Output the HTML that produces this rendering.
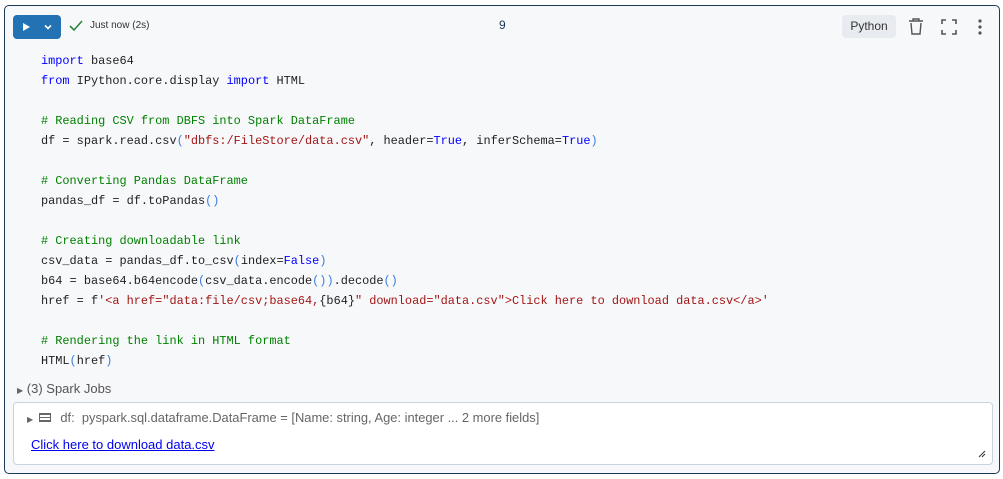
<!DOCTYPE html>
<html><head><style>
*{margin:0;padding:0;box-sizing:border-box}
body{width:1003px;height:479px;background:#fff;font-family:"Liberation Sans",sans-serif;position:relative;overflow:hidden}
.cell{position:absolute;left:4px;top:5px;width:996px;height:469px;border:1px solid #1b3a57;border-radius:5px;background:#f7f8fa}
.run{position:absolute;left:8px;top:9px;width:48px;height:24px;background:#2272b4;border-radius:4px}
.code{position:absolute;left:36px;top:45px;font-family:"Liberation Mono",monospace;font-size:11.9px;color:#1f1f1f;white-space:pre;line-height:20px}
.k{color:#0000ff}.c{color:#008000}.s{color:#a31515}.b{color:#3b7ce0}
.out{position:absolute;left:8px;top:396px;width:980px;height:63px;background:#fff;border:1px solid #c8d3de;border-radius:4px}
</style></head><body>
<div class="cell">
 <div class="run">
  <svg width="48" height="24" style="position:absolute;left:0;top:0"><path d="M10 8 L17 12 L10 16Z" fill="#fff"/><path d="M32 10.5 L35 13.5 L38 10.5" stroke="#fff" stroke-width="1.6" fill="none"/></svg>
 </div>
 <svg width="16" height="16" style="position:absolute;left:63px;top:12px"><path d="M2 8 L6 12 L14 3" stroke="#2e8540" stroke-width="1.6" fill="none"/></svg>
 <div style="position:absolute;left:85px;top:14px;font-size:10px;color:#333">Just now (2s)</div>
 <div style="position:absolute;left:494px;top:12px;font-size:12px;color:#1b3a57">9</div>
 <div style="position:absolute;left:837px;top:9px;width:54px;height:23px;background:#e8ecf0;border-radius:4px;font-size:12px;color:#333;text-align:center;line-height:23px">Python</div>
 <svg width="18" height="18" style="position:absolute;left:902px;top:12px"><path d="M2 3H16M6 3V1H12V3M4 5L5 16H13L14 5" stroke="#555" stroke-width="1.4" fill="none"/></svg>
 <svg width="18" height="18" style="position:absolute;left:935px;top:12px"><path d="M2 6V2H6M12 2H16V6M16 12V16H12M6 16H2V12" stroke="#555" stroke-width="1.6" fill="none"/></svg>
 <svg width="6" height="18" style="position:absolute;left:972px;top:12px"><circle cx="3" cy="3" r="1.6" fill="#555"/><circle cx="3" cy="9" r="1.6" fill="#555"/><circle cx="3" cy="15" r="1.6" fill="#555"/></svg>
 <div class="code"><span class="k">import</span> base64
<span class="k">from</span> IPython.core.display <span class="k">import</span> HTML

<span class="c"># Reading CSV from DBFS into Spark DataFrame</span>
df = spark.read.csv<span class="b">(</span><span class="s">"dbfs:/FileStore/data.csv"</span>, header=<span class="k">True</span>, inferSchema=<span class="k">True</span><span class="b">)</span>

<span class="c"># Converting Pandas DataFrame</span>
pandas_df = df.toPandas<span class="b">()</span>

<span class="c"># Creating downloadable link</span>
csv_data = pandas_df.to_csv<span class="b">(</span>index=<span class="k">False</span><span class="b">)</span>
b64 = base64.b64encode<span class="b">(</span>csv_data.encode<span class="b">())</span>.decode<span class="b">()</span>
href = f<span class="s">'&lt;a href="data:file/csv;base64,</span>{b64}<span class="s">" download="data.csv"&gt;Click here to download data.csv&lt;/a&gt;'</span>

<span class="c"># Rendering the link in HTML format</span>
HTML<span class="b">(</span>href<span class="b">)</span></div>
 <div style="position:absolute;left:12px;top:375px;font-size:13px;color:#555"><span style="font-size:8px;color:#666">&#9654;</span> (3) Spark Jobs</div>
 <div class="out">
  <div style="position:absolute;left:13px;top:7px;font-size:12.9px;color:#666"><span style="font-size:8px">&#9654;</span> <span style="display:inline-block;width:12px;height:9px;border:1px solid #666;border-width:2px 1px;vertical-align:0;margin:0 6px 0 2px;background:repeating-linear-gradient(#fff 0 2px,#666 2px 3px)"></span> df:&nbsp; pyspark.sql.dataframe.DataFrame = [Name: string, Age: integer ... 2 more fields]</div>
  <div style="position:absolute;left:17px;top:34px;font-size:13px;color:#0000ee;text-decoration:underline">Click here to download data.csv</div>
  <svg width="8" height="8" style="position:absolute;right:6px;bottom:6px"><path d="M7 1L1 7M7 4L4 7" stroke="#333" stroke-width="1"/></svg>
 </div>
</div>
</body></html>
